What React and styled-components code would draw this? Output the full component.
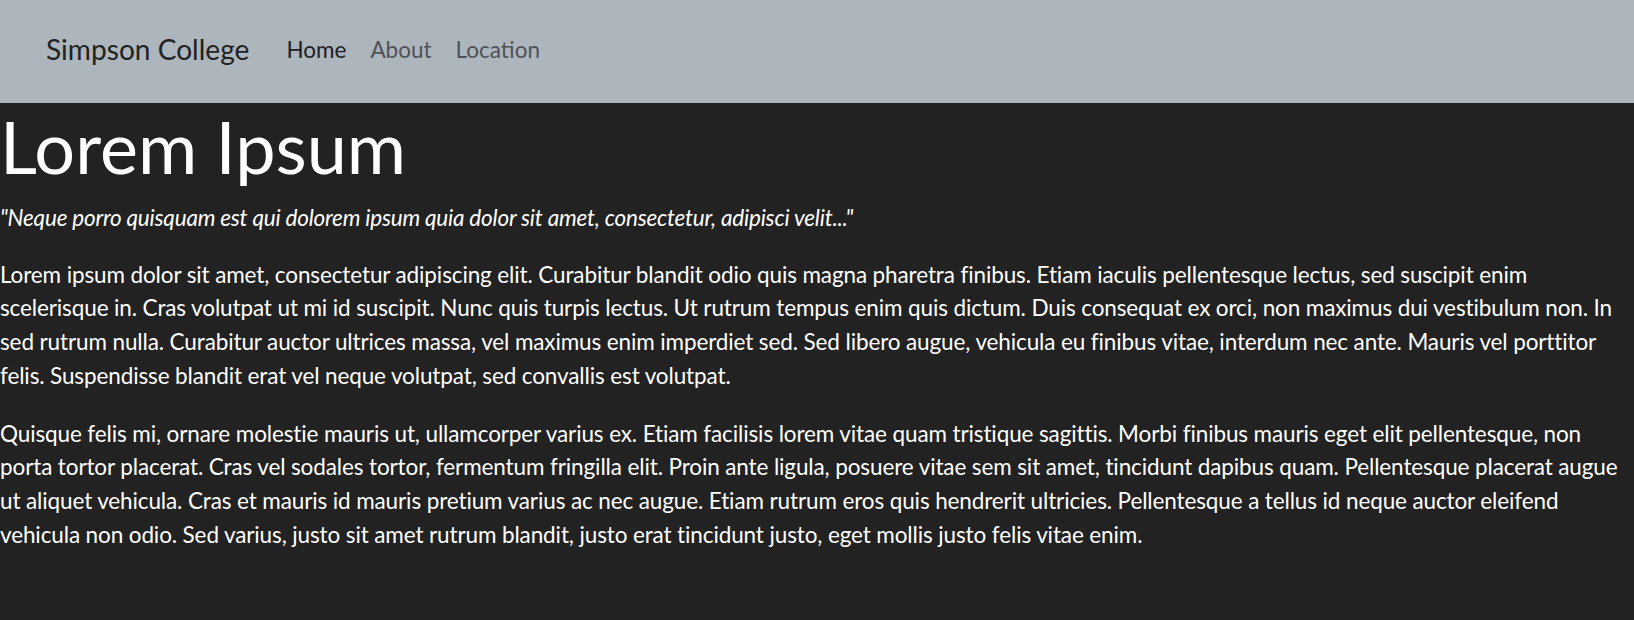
import React from 'react'
import styled, { createGlobalStyle } from 'styled-components'

const GlobalStyle = createGlobalStyle`
  html, body {
    margin: 0;
    padding: 0;
    background: #222222;
  }
  body {
    font-family: Lato, "Noto Sans", sans-serif;
    font-size: 22.5px;
    line-height: 1.5;
    color: #ffffff;
  }
`

const Page = styled.div`
  min-height: 620px;
  background: #222222;
`

const Navbar = styled.nav`
  height: 103px;
  box-sizing: border-box;
  padding: 0 0 4px 46px;
  display: flex;
  align-items: center;
  background-color: #adb5bd;
`

const Brand = styled.a`
  font-size: 28.1px;
  line-height: 1.5;
  color: #222222;
  text-decoration: none;
  margin-right: 25px;
`

const NavList = styled.ul`
  display: flex;
  list-style: none;
  margin: 0;
  padding: 0;
`

const NavLink = styled.a`
  display: block;
  padding: 0 12px;
  font-size: 22.5px;
  line-height: 1.5;
  text-decoration: none;
  color: ${p => (p.$active ? '#1e2022' : '#4f5357')};
`

const Main = styled.main`
  padding: 0;
`

const Title = styled.h1`
  margin: 0 0 12px;
  font-size: 72px;
  font-weight: 400;
  line-height: 1.2;
`

const Quote = styled.p`
  margin: 0 0 22.5px;
  font-style: italic;
  letter-spacing: -0.2px;
`

const Paragraph = styled.p`
  margin: 0 0 24px;
  letter-spacing: -0.12px;
`

const links = [
  { label: 'Home', active: true },
  { label: 'About' },
  { label: 'Location' },
]

export default function App() {
  return (
    <Page>
      <GlobalStyle />
      <Navbar>
        <Brand href="#">Simpson College</Brand>
        <NavList>
          {links.map(l => (
            <li key={l.label}>
              <NavLink href="#" $active={l.active}>{l.label}</NavLink>
            </li>
          ))}
        </NavList>
      </Navbar>
      <Main>
        <Title>Lorem Ipsum</Title>
        <Quote>"Neque porro quisquam est qui dolorem ipsum quia dolor sit amet, consectetur, adipisci velit..."</Quote>
        <Paragraph>
          Lorem ipsum dolor sit amet, consectetur adipiscing elit. Curabitur blandit odio quis magna pharetra finibus. Etiam iaculis pellentesque lectus, sed suscipit enim scelerisque in. Cras volutpat ut mi id suscipit. Nunc quis turpis lectus. Ut rutrum tempus enim quis dictum. Duis consequat ex orci, non maximus dui vestibulum non. In sed rutrum nulla. Curabitur auctor ultrices massa, vel maximus enim imperdiet sed. Sed libero augue, vehicula eu finibus vitae, interdum nec ante. Mauris vel porttitor felis. Suspendisse blandit erat vel neque volutpat, sed convallis est volutpat.
        </Paragraph>
        <Paragraph>
          Quisque felis mi, ornare molestie mauris ut, ullamcorper varius ex. Etiam facilisis lorem vitae quam tristique sagittis. Morbi finibus mauris eget elit pellentesque, non porta tortor placerat. Cras vel sodales tortor, fermentum fringilla elit. Proin ante ligula, posuere vitae sem sit amet, tincidunt dapibus quam. Pellentesque placerat augue ut aliquet vehicula. Cras et mauris id mauris pretium varius ac nec augue. Etiam rutrum eros quis hendrerit ultricies. Pellentesque a tellus id neque auctor eleifend vehicula non odio. Sed varius, justo sit amet rutrum blandit, justo erat tincidunt justo, eget mollis justo felis vitae enim.
        </Paragraph>
      </Main>
    </Page>
  )
}
